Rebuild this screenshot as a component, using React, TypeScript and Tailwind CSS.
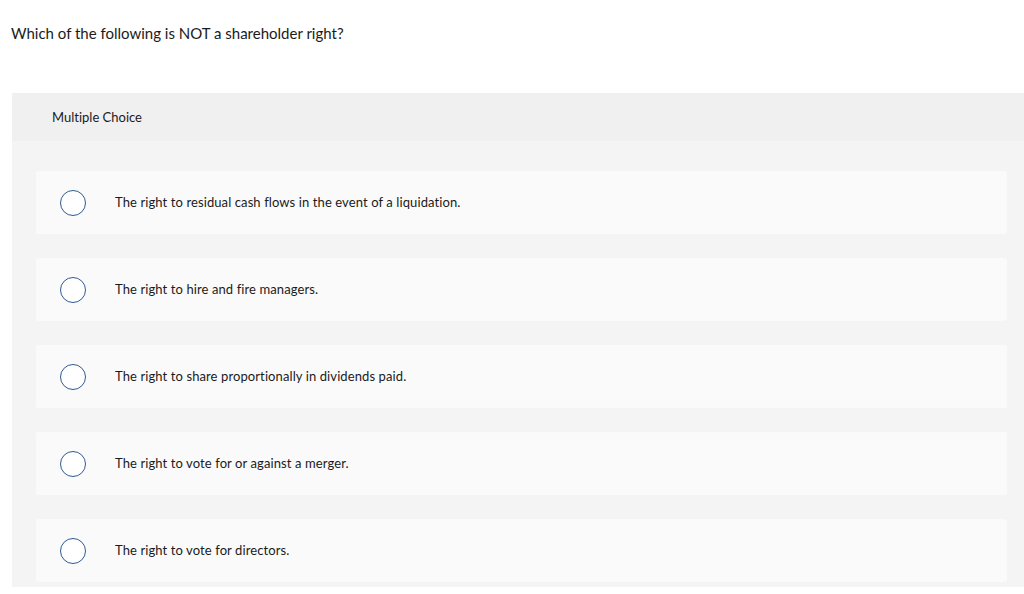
import React from 'react';

const options = [
  'The right to residual cash flows in the event of a liquidation.',
  'The right to hire and fire managers.',
  'The right to share proportionally in dividends paid.',
  'The right to vote for or against a merger.',
  'The right to vote for directors.',
];

export default function App() {
  return (
    <div className="w-[1024px] h-[594px] overflow-hidden bg-white text-[#1b1b1b] font-['Lato','Liberation_Sans',sans-serif] [font-variant-ligatures:none]">
      <p className="pl-[11px] pt-[24px] text-[15px] leading-[18px]">
        Which of the following is NOT a shareholder right?
      </p>

      <div className="ml-[12px] mt-[51px] bg-[#f4f4f4]">
        <div className="h-[48px] bg-[#f0f0f0] pl-[40px] flex items-center text-[13px] pt-px">
          Multiple Choice
        </div>
        <div className="pt-[30px] pb-[5px] pl-[24px] pr-[5px] flex flex-col gap-[24px]">
          {options.map((opt) => (
            <div
              key={opt}
              className="h-[63px] w-[971px] bg-[#fafafa] rounded-[3px] flex items-center"
            >
              <span className="ml-[24px] w-[26px] h-[26px] rounded-full border border-[#2d5b94] bg-white shrink-0" />
              <span className="ml-[29px] text-[13px] tracking-[0.1px] pt-px">{opt}</span>
            </div>
          ))}
        </div>
      </div>
    </div>
  );
}
